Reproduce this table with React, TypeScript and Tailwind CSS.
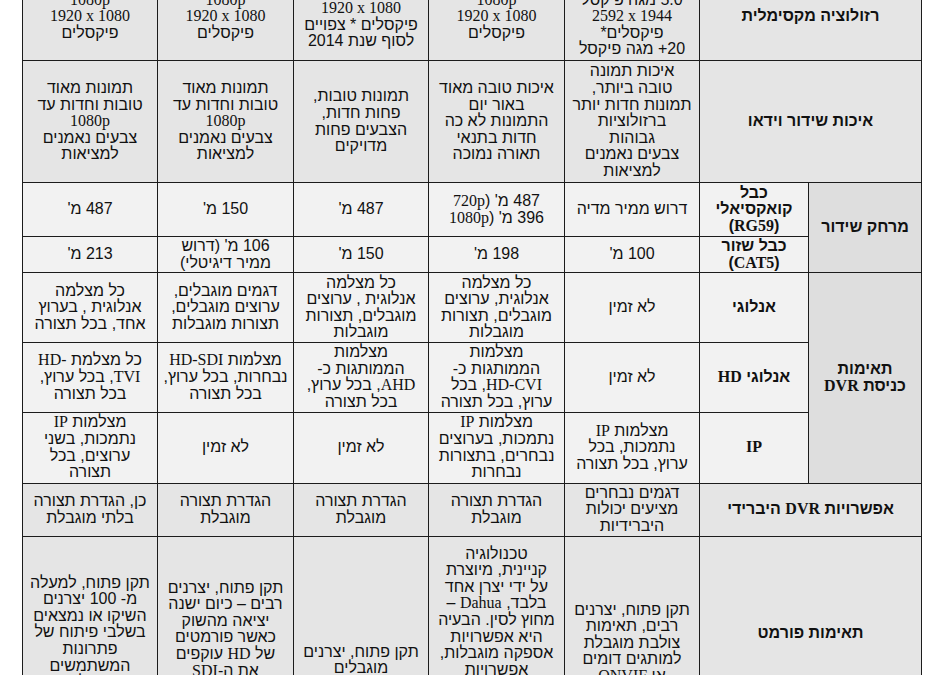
import type { ReactNode } from 'react';

const GRAY = 'bg-[#e5e5e5]';
const LIGHT = 'bg-[#f2f2f2]';
const DARK = 'bg-[#dedede]';

// latin words/resolutions go in serif, hebrew in sans
const seg = (s: string): ReactNode[] =>
  s.split(/([0-9]{4} x [0-9]{4}|[0-9.]*[A-Za-z][A-Za-z0-9-]*)/).map((p, i) =>
    i % 2 === 1 ? (
      <span key={i} dir="ltr" className="[unicode-bidi:isolate] font-['Liberation_Serif',serif] text-[16px]">
        {p}
      </span>
    ) : (
      p
    )
  );

type CellProps = {
  lines: string[];
  bg?: string;
  bold?: boolean;
  rowSpan?: number;
  colSpan?: number;
  top?: string;
};

const Cell = ({ lines, bg = GRAY, bold, rowSpan, colSpan, top }: CellProps) => (
  <td
    rowSpan={rowSpan}
    colSpan={colSpan}
    className={`border border-[#1c1c1c] px-1 text-center ${bg} ${bold ? 'font-bold' : ''} ${
      top ? `align-top ${top}` : 'align-middle py-px'
    }`}
  >
    {lines.map((ln, i) => (
      <div key={i} className="whitespace-nowrap">
        {seg(ln)}
      </div>
    ))}
  </td>
);

const PIX = ['1080p', '1920 x 1080', 'פיקסלים'];
const GOOD = ['תמונות מאוד', 'טובות וחדות עד', '1080p', 'צבעים נאמנים', 'למציאות'];
const LIMITED = ['הגדרת תצורה', 'מוגבלת'];

export default function App() {
  return (
    <div className="w-[943px] h-[675px] overflow-hidden bg-white">
      <table
        dir="rtl"
        className="ml-[22px] -mt-[28px] w-[899px] table-fixed border-collapse text-[16px] leading-[16.6px] text-[#111] font-['Liberation_Sans','DejaVu_Sans',sans-serif]"
      >
        <colgroup>
          <col className="w-[113px]" />
          <col className="w-[109px]" />
          <col className="w-[135px]" />
          <col className="w-[136px]" />
          <col className="w-[135px]" />
          <col className="w-[136px]" />
          <col className="w-[135px]" />
        </colgroup>
        <tbody>
          <tr className="h-[88px]">
            <Cell colSpan={2} bold lines={['רזולוציה מקסימלית']} />
            <Cell
              lines={['עד', '5.0 מגה פיקסל', '2592 x 1944', 'פיקסלים*', '\u2066+20\u2069 מגה פיקסל']}
            />
            <Cell lines={PIX} />
            <Cell lines={['1080p', '1920 x 1080', 'פיקסלים * צפויים', 'לסוף שנת 2014']} />
            <Cell lines={PIX} />
            <Cell lines={PIX} />
          </tr>
          <tr className="h-[122px]">
            <Cell colSpan={2} bold lines={['איכות שידור וידאו']} />
            <Cell
              lines={[
                'איכות תמונה',
                'טובה ביותר,',
                'תמונות חדות יותר',
                'ברזולוציות',
                'גבוהות',
                'צבעים נאמנים',
                'למציאות',
              ]}
            />
            <Cell lines={['איכות טובה מאוד', 'באור יום', 'התמונות לא כה', 'חדות בתנאי', 'תאורה נמוכה']} />
            <Cell lines={['תמונות טובות,', 'פחות חדות,', 'הצבעים פחות', 'מדויקים']} />
            <Cell lines={GOOD} />
            <Cell lines={GOOD} />
          </tr>
          <tr className="h-[54px]">
            <Cell rowSpan={2} bg={DARK} bold lines={['מרחק שידור']} />
            <Cell bg={LIGHT} bold lines={['כבל', 'קואקסיאלי', '(RG59)']} />
            <Cell bg={LIGHT} lines={['דרוש ממיר מדיה']} />
            <Cell bg={LIGHT} lines={["487 מ' (720p", "396 מ' (1080p"]} />
            <Cell bg={LIGHT} lines={["487 מ'"]} />
            <Cell bg={LIGHT} lines={["150 מ'"]} />
            <Cell bg={LIGHT} lines={["487 מ'"]} />
          </tr>
          <tr className="h-[36px]">
            <Cell bg={LIGHT} bold lines={['כבל שזור', '(CAT5)']} />
            <Cell bg={LIGHT} lines={["100 מ'"]} />
            <Cell bg={LIGHT} lines={["198 מ'"]} />
            <Cell bg={LIGHT} lines={["150 מ'"]} />
            <Cell bg={LIGHT} lines={["106 מ' (דרוש", 'ממיר דיגיטלי)']} />
            <Cell bg={LIGHT} lines={["213 מ'"]} />
          </tr>
          <tr className="h-[70px]">
            <Cell rowSpan={3} bg={DARK} bold lines={['תאימות', 'כניסת DVR']} />
            <Cell bg={LIGHT} bold lines={['אנלוגי']} />
            <Cell bg={LIGHT} lines={['לא זמין']} />
            <Cell bg={LIGHT} lines={['כל מצלמה', 'אנלוגית, ערוצים', 'מוגבלים, תצורות', 'מוגבלות']} />
            <Cell bg={LIGHT} lines={['כל מצלמה', 'אנלוגית , ערוצים', 'מוגבלים, תצורות', 'מוגבלות']} />
            <Cell bg={LIGHT} lines={['דגמים מוגבלים,', 'ערוצים מוגבלים,', 'תצורות מוגבלות']} />
            <Cell bg={LIGHT} lines={['כל מצלמה', 'אנלוגית , בערוץ', 'אחד, בכל תצורה']} />
          </tr>
          <tr className="h-[69px]">
            <Cell bg={LIGHT} bold lines={['אנלוגי HD']} />
            <Cell bg={LIGHT} lines={['לא זמין']} />
            <Cell bg={LIGHT} lines={['מצלמות', 'הממותגות כ-', 'HD-CVI, בכל', 'ערוץ, בכל תצורה']} />
            <Cell bg={LIGHT} lines={['מצלמות', 'הממותגות כ-', 'AHD, בכל ערוץ,', 'בכל תצורה']} />
            <Cell bg={LIGHT} lines={['מצלמות HD-SDI', 'נבחרות, בכל ערוץ,', 'בכל תצורה']} />
            <Cell bg={LIGHT} lines={['כל מצלמת -HD', 'TVI, בכל ערוץ,', 'בכל תצורה']} />
          </tr>
          <tr className="h-[71px]">
            <Cell bg={LIGHT} bold lines={['IP']} />
            <Cell bg={LIGHT} lines={['מצלמות IP', 'נתמכות, בכל', 'ערוץ, בכל תצורה']} />
            <Cell bg={LIGHT} lines={['מצלמות IP', 'נתמכות, בערוצים', 'נבחרים, בתצורות', 'נבחרות']} />
            <Cell bg={LIGHT} lines={['לא זמין']} />
            <Cell bg={LIGHT} lines={['לא זמין']} />
            <Cell bg={LIGHT} lines={['מצלמות IP', 'נתמכות, בשני', 'ערוצים, בכל', 'תצורה']} />
          </tr>
          <tr className="h-[53px]">
            <Cell colSpan={2} bold lines={['אפשרויות DVR היברידי']} />
            <Cell lines={['דגמים נבחרים', 'מציעים יכולות', 'היברידיות']} />
            <Cell lines={LIMITED} />
            <Cell lines={LIMITED} />
            <Cell lines={LIMITED} />
            <Cell lines={['כן, הגדרת תצורה', 'בלתי מוגבלת']} />
          </tr>
          <tr className="h-[250px]">
            <Cell colSpan={2} bold top="pt-[88px]" lines={['תאימות פורמט']} />
            <Cell
              top="pt-[65px]"
              lines={['תקן פתוח, יצרנים', 'רבים, תאימות', 'צולבת מוגבלת', 'למותגים דומים', 'או ONVIF']}
            />
            <Cell
              top="pt-[9px]"
              lines={[
                'טכנולוגיה',
                'קניינית, מיוצרת',
                'על ידי יצרן אחד',
                'בלבד, Dahua –',
                'מחוץ לסין. הבעיה',
                'היא אפשרויות',
                'אספקה מוגבלות,',
                'אפשרויות',
                'התקנה ושירות',
                'מוגבלות',
              ]}
            />
            <Cell top="pt-[107px]" lines={['תקן פתוח, יצרנים', 'מוגבלים']} />
            <Cell
              top="pt-[43px]"
              lines={[
                'תקן פתוח, יצרנים',
                'רבים – כיום ישנה',
                'יציאה מהשוק',
                'כאשר פורמטים',
                'של HD עוקפים',
                'את ה-SDI',
                'בהיקפי מכירות',
              ]}
            />
            <Cell
              top="pt-[38px]"
              lines={[
                'תקן פתוח, למעלה',
                'מ- 100 יצרנים',
                'השיקו או נמצאים',
                'בשלבי פיתוח של',
                'פתרונות',
                'המשתמשים',
                'בטכנולוגיה',
              ]}
            />
          </tr>
        </tbody>
      </table>
    </div>
  );
}
